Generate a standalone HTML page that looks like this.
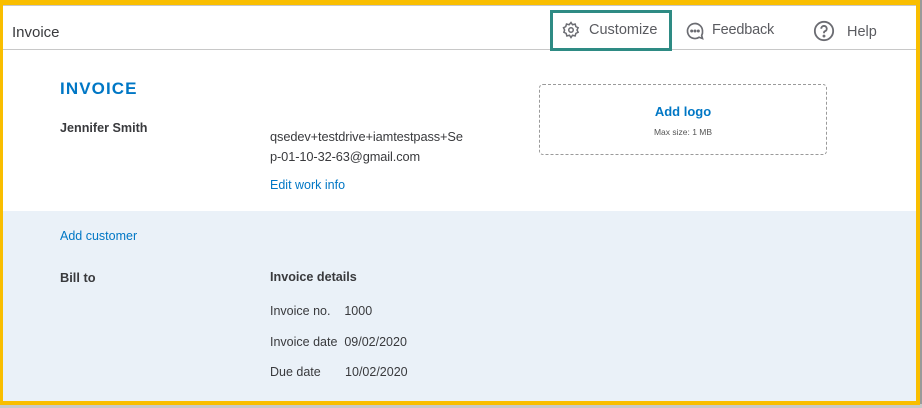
<!DOCTYPE html>
<html><head><meta charset="utf-8"><style>
*{margin:0;padding:0;box-sizing:border-box}
body{width:922px;height:408px;overflow:hidden;background:#9a9a9a;font-family:"Liberation Sans",Arial,sans-serif;position:relative}
.ticks{position:absolute;left:0;top:404px;width:922px;height:4px;background:#c9c9c9}
.frame{position:absolute;left:0;top:0;width:920px;height:405px;border:4px solid #f9be00;border-top-width:5px;border-left-width:3px;border-right-width:4px;background:#fff;overflow:hidden}
.hdr{position:absolute;left:0;top:0;width:100%;height:45px;border-top:1px solid #c8c8c8;border-bottom:1px solid #c8c8c8;background:#fff}
.t{position:absolute;font-size:14px;color:#393a3d}
.blue{position:absolute;left:0;top:206px;width:100%;height:200px;background:#eaf1f8}
a,.lk{color:#0077c5;font-size:13px;position:absolute}
.cust{position:absolute;left:547px;top:5px;width:122px;height:41px;border:3px solid #2e8b84}
</style></head><body>
<div class="ticks"></div>
<div class="frame">
 <div class="hdr">
  <div class="t" style="left:9px;top:18px;font-size:15px">Invoice</div>
 </div>
 <div class="cust"></div>
 <svg style="position:absolute;left:559px;top:16px" width="18" height="18" viewBox="0 0 24 24" fill="none" stroke="#6b6c72" stroke-width="2"><circle cx="12" cy="12" r="3"/><path d="M12 2l2 3 3.5-1 1 3.5 3 1.5-1.5 3 1.5 3-3 1.5-1 3.5-3.5-1-2 3-2-3-3.5 1-1-3.5-3-1.5L3.5 12 2 9l3-1.5 1-3.5 3.5 1z"/></svg>
 <div class="t" style="left:586px;top:17px;color:#5a5b60;font-size:14.5px">Customize</div>
 <svg style="position:absolute;left:682px;top:16px" width="20" height="20" viewBox="0 0 24 24" fill="none" stroke="#6b6c72" stroke-width="2"><path d="M21 12a9 9 0 1 0-4 7.5l4 1.5-1-3.5A9 9 0 0 0 21 12z"/><circle cx="8" cy="12" r=".8" fill="#6b6c72"/><circle cx="12" cy="12" r=".8" fill="#6b6c72"/><circle cx="16" cy="12" r=".8" fill="#6b6c72"/></svg>
 <div class="t" style="left:709px;top:17px;color:#5a5b60;font-size:14.5px;letter-spacing:-0.2px">Feedback</div>
 <svg style="position:absolute;left:810px;top:15px" width="22" height="22" viewBox="0 0 24 24" fill="none" stroke="#6b6c72" stroke-width="2"><circle cx="12" cy="12" r="10"/><path d="M9 9.5a3 3 0 1 1 4 2.8c-.7.3-1 1-1 1.7v.5"/><circle cx="12" cy="17.5" r=".6" fill="#6b6c72"/></svg>
 <div class="t" style="left:844px;top:19px;color:#5a5b60;font-size:14.5px">Help</div>

 <div style="position:absolute;left:57px;top:74px;color:#0077c5;font-weight:bold;font-size:17px;letter-spacing:1.1px">INVOICE</div>
 <div class="t" style="left:57px;top:116px;font-size:12.6px;font-weight:bold">Jennifer Smith</div>
 <div class="t" style="left:267px;top:122px;font-size:12.8px;line-height:20px;width:200px;letter-spacing:-0.1px">qsedev+testdrive+iamtestpass+Se<br>p-01-10-32-63@gmail.com</div>
 <div class="lk" style="left:267px;top:173px;font-size:12.5px">Edit work info</div>
 <div style="position:absolute;left:536px;top:79px;width:288px;height:71px;border:1px dashed #9a9a9a;border-radius:4px;text-align:center">
  <div style="color:#0077c5;font-weight:bold;font-size:13px;margin-top:19px">Add logo</div>
  <div style="color:#555;font-size:8.5px;margin-top:8px">Max size: 1 MB</div>
 </div>

 <div class="blue">
  <div class="lk" style="left:57px;top:18px;font-size:12.5px">Add customer</div>
  <div class="t" style="left:57px;top:59px;font-size:12.8px;font-weight:bold">Bill to</div>
  <div class="t" style="left:267px;top:59px;font-size:12.6px;font-weight:bold">Invoice details</div>
  <div class="t" style="left:267px;top:93px;font-size:12.5px">Invoice no.&nbsp;&nbsp;&nbsp;&nbsp;1000</div>
  <div class="t" style="left:267px;top:124px;font-size:12.5px">Invoice date&nbsp;&nbsp;09/02/2020</div>
  <div class="t" style="left:267px;top:154px;font-size:12.5px">Due date&nbsp;&nbsp;&nbsp;&nbsp;&nbsp;&nbsp;&nbsp;10/02/2020</div>
 </div>
</div>
</body></html>
